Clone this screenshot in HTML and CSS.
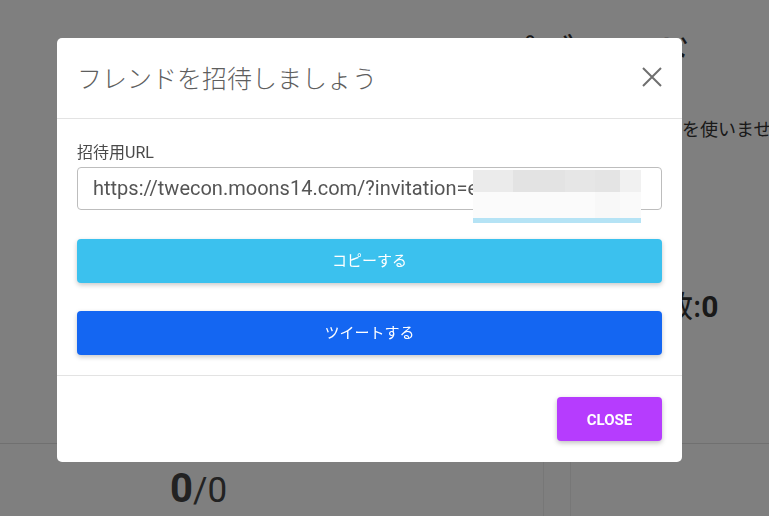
FILE: index.html
```html
<!DOCTYPE html>
<html lang="ja">
<head>
<meta charset="utf-8">
<title>フレンドを招待しましょう</title>
<link rel="stylesheet" href="styles.css">
</head>
<body>
<div class="page">
  <div class="top">
    <div class="left-col"></div>
    <div class="right-col">
      <h2 class="pg-title">パズワード</h2>
      <p class="pg-text">フレンド招待コードを使いませんか</p>
      <p class="pg-count">招待人数:<b>0</b></p>
    </div>
  </div>
  <div class="bottom">
    <div class="stat"><span class="stat-big">0</span><span class="stat-small">/0</span></div>
    <div class="gap-col"></div>
    <div class="stat-right"></div>
  </div>
</div>

<div class="backdrop"></div>

<div class="modal-wrap">
  <div class="modal">
    <div class="modal-header">
      <h5 class="modal-title">フレンドを招待しましょう</h5>
      <button class="close-x" aria-label="Close">
        <svg width="20" height="20" viewBox="0 0 20 20"><path d="M1 1 L19 19 M19 1 L1 19" stroke="#6f6f6f" stroke-width="2" fill="none"/></svg>
      </button>
    </div>
    <div class="modal-body">
      <label class="field-label">招待用URL</label>
      <div class="field">
        <div class="field-input">https://twecon.moons14.com/?invitation=e</div>
        <div class="redact">
          <div class="redact-top">
            <span class="rt1"></span><span class="rt2"></span><span class="rt3"></span><span class="rt4"></span><span class="rt5"></span>
          </div>
          <div class="redact-mid">
            <span class="rm1"></span><span class="rm2"></span><span class="rm3"></span>
          </div>
          <div class="redact-bar"></div>
        </div>
      </div>
      <button class="btn btn-copy">コピーする</button>
      <button class="btn btn-tweet">ツイートする</button>
    </div>
    <div class="modal-footer">
      <button class="btn-close">Close</button>
    </div>
  </div>
</div>
</body>
</html>
```

FILE: styles.css
```css
* { box-sizing: border-box; }

html, body {
  margin: 0;
  padding: 0;
  width: 769px;
  height: 516px;
  overflow: hidden;
  background: #ffffff;
  font-family: "Roboto", "Noto Sans CJK JP", sans-serif;
}

.page {
  width: 769px;
  height: 516px;
  color: #333;
}

.top {
  height: 444px;
  border-bottom: 1px solid #e0e0e0;
  display: grid;
  grid-template-columns: 497px 1fr;
}

.right-col {
  padding-top: 27px;
  white-space: nowrap;
  overflow: hidden;
}

.pg-title {
  margin: 0;
  font-family: "Noto Sans CJK JP", sans-serif;
  font-size: 39px;
  line-height: 47px;
  font-weight: 400;
  color: #333;
}

.pg-text {
  margin: 41px 0 0 23px;
  font-family: "Noto Sans CJK JP", sans-serif;
  font-size: 18px;
  line-height: 27px;
  color: #333;
}

.pg-count {
  margin: 141px 0 0 0;
  padding-left: 76px;
  font-family: "Noto Sans CJK JP", sans-serif;
  font-size: 30px;
  line-height: 42px;
  color: #333;
}

.pg-count b {
  font-family: "Roboto", sans-serif;
  font-weight: 700;
}

.bottom {
  display: grid;
  grid-template-columns: 543px 28px 1fr;
  height: 72px;
}

.stat {
  padding: 21px 0 0 170px;
  line-height: 48px;
  color: #444;
}

.stat-big {
  font-size: 40px;
  font-weight: 700;
  font-family: "Roboto", sans-serif;
}

.stat-small {
  font-size: 35px;
  font-family: "Roboto", sans-serif;
}

.gap-col {
  border-left: 1px solid #eeeeee;
  border-right: 1px solid #eeeeee;
}

.backdrop {
  position: fixed;
  inset: 0;
  background: rgba(0, 0, 0, 0.5);
}

.modal-wrap {
  position: fixed;
  inset: 0;
  padding: 38px 0 0 57px;
}

.modal {
  width: 625px;
  height: 424px;
  background: #fff;
  border-radius: 5px;
  display: flex;
  flex-direction: column;
}

.modal-header {
  height: 81px;
  border-bottom: 1px solid #e3e3e3;
  display: flex;
  align-items: center;
  justify-content: space-between;
  padding: 0 20px 2px 20px;
}

.modal-title {
  margin: 0;
  font-family: "Noto Sans CJK JP", sans-serif;
  font-weight: 300;
  font-size: 25px;
  line-height: 32px;
  color: #5e5e5e;
}

.close-x {
  border: 0;
  background: transparent;
  padding: 0;
  width: 20px;
  height: 20px;
  display: flex;
  cursor: pointer;
}

.modal-body {
  padding: 22px 20px 20px 20px;
  border-bottom: 1px solid #e3e3e3;
  display: flex;
  flex-direction: column;
}

.field-label {
  font-family: "Roboto", "Noto Sans CJK JP", sans-serif;
  font-size: 16px;
  line-height: 24px;
  color: #4a4a4a;
}

.field {
  position: relative;
  margin-top: 2px;
}

.field-input {
  height: 43px;
  border: 1px solid #bdbdbd;
  border-radius: 4px;
  padding: 0 15px;
  font-family: "Roboto", sans-serif;
  font-size: 20px;
  line-height: 41px;
  color: #555;
  white-space: nowrap;
  overflow: hidden;
}

.redact {
  position: absolute;
  left: 396px;
  top: 3px;
  width: 168px;
  display: flex;
  flex-direction: column;
}

.redact-top {
  display: flex;
  height: 22px;
}
.redact-top span { display: block; height: 100%; }
.rt1 { width: 40px; background: #ebebeb; }
.rt2 { width: 52px; background: #e3e3e3; }
.rt3 { width: 30px; background: #e6e6e6; }
.rt4 { width: 25px; background: #e4e4e4; }
.rt5 { width: 21px; background: #f1f1f1; }

.redact-mid {
  display: flex;
  height: 26px;
}
.redact-mid span { display: block; height: 100%; }
.rm1 { width: 122px; background: #fbfbfb; }
.rm2 { width: 25px; background: #f8f8f8; }
.rm3 { width: 21px; background: #fafafa; }

.redact-bar {
  height: 5px;
  background: #b5e3f5;
}

.btn {
  border: 0;
  border-radius: 4px;
  height: 44px;
  width: 100%;
  color: #fff;
  font-family: "Noto Sans CJK JP", sans-serif;
  font-size: 15px;
  line-height: 42px;
  padding: 0 0 2px 0;
  box-shadow: 0 2px 5px rgba(0, 0, 0, 0.22);
  cursor: pointer;
}

.btn-copy {
  margin-top: 29px;
  background: #3bc1ee;
}

.btn-tweet {
  margin-top: 28px;
  background: #1466f2;
}

.modal-footer {
  flex: 1;
  display: flex;
  justify-content: flex-end;
  align-items: flex-start;
  padding: 21px 20px 0 0;
}

.btn-close {
  width: 105px;
  height: 44px;
  border: 0;
  border-radius: 4px;
  background: #b63cfe;
  color: #fff;
  font-family: "Roboto", sans-serif;
  font-weight: 700;
  font-size: 15px;
  padding-top: 2px;
  text-transform: uppercase;
  box-shadow: 0 2px 5px rgba(0, 0, 0, 0.25);
  cursor: pointer;
}
```
